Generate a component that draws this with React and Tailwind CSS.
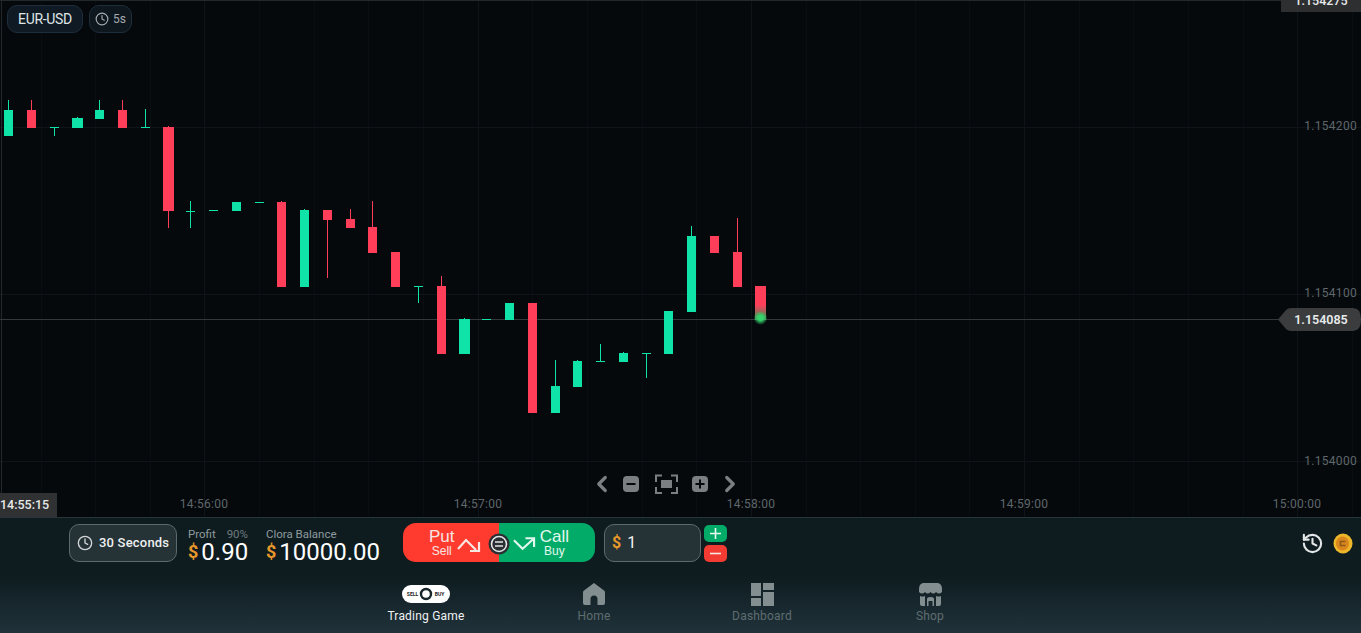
import React from "react";
import { Clock, History, ChevronLeft, ChevronRight } from "lucide-react";

const UP = "#10e3a8";
const DOWN = "#ff3f5a";

// x, width, open/close top, open/close bottom, wick top, wick bottom
const candles = [
  [4, 9, 110, 136, 100, 136, UP],
  [27, 9, 110, 128, 100, 128, DOWN],
  [50, 9, 127, 128, 127, 136, UP],
  [72, 11, 118, 128, 117, 128, UP],
  [95, 9, 110, 119, 100, 119, UP],
  [118, 9, 110, 128, 100, 128, DOWN],
  [141, 9, 127, 128, 109, 128, UP],
  [163, 11, 127, 211, 126, 228, DOWN],
  [186, 9, 211, 212, 201, 228, UP],
  [209, 9, 210, 211, 210, 211, UP],
  [232, 9, 202, 211, 202, 211, UP],
  [255, 9, 202, 203, 202, 203, UP],
  [277, 9, 202, 287, 201, 287, DOWN],
  [300, 9, 210, 287, 209, 287, UP],
  [323, 9, 210, 220, 210, 278, DOWN],
  [346, 9, 219, 228, 209, 228, DOWN],
  [368, 9, 227, 253, 201, 253, DOWN],
  [391, 9, 252, 287, 252, 287, DOWN],
  [414, 9, 286, 287, 286, 303, UP],
  [437, 9, 286, 354, 276, 354, DOWN],
  [459, 11, 319, 354, 318, 354, UP],
  [482, 9, 319, 320, 319, 320, UP],
  [505, 9, 303, 320, 303, 320, UP],
  [528, 9, 303, 413, 303, 413, DOWN],
  [551, 9, 386, 413, 360, 413, UP],
  [573, 9, 361, 387, 360, 387, UP],
  [596, 9, 361, 362, 344, 362, UP],
  [619, 9, 353, 362, 352, 362, UP],
  [642, 9, 353, 354, 353, 378, UP],
  [664, 9, 311, 354, 311, 354, UP],
  [687, 9, 236, 312, 226, 312, UP],
  [710, 9, 236, 253, 236, 253, DOWN],
  [733, 9, 252, 287, 218, 287, DOWN],
];

const minorX = [41, 95, 150, 259, 314, 368, 423, 532, 587, 642, 696, 806, 860, 915, 969, 1079, 1133, 1188, 1243, 1352];
const majorX = [204, 478, 751, 1024, 1297];
const timeLabels = [
  [204, "14:56:00"],
  [478, "14:57:00"],
  [751, "14:58:00"],
  [1024, "14:59:00"],
  [1297, "15:00:00"],
];
const priceLabels = [
  [130, "1.154200"],
  [297, "1.154100"],
  [465, "1.154000"],
];

const ChartDrawing = () => (
  <svg className="absolute inset-0" width="1361" height="517" viewBox="0 0 1361 517">
    <defs>
      <linearGradient id="liveCandle" x1="0" y1="0" x2="0" y2="1">
        <stop offset="0.55" stopColor={DOWN} />
        <stop offset="1" stopColor="#2f8f55" />
      </linearGradient>
      <radialGradient id="liveDot">
        <stop offset="0.35" stopColor="#35d36b" />
        <stop offset="1" stopColor="#35d36b" stopOpacity="0" />
      </radialGradient>
    </defs>

    {/* grid */}
    {minorX.map((x) => (
      <line key={x} x1={x + 0.5} x2={x + 0.5} y1="0" y2="517" stroke="#090e12" />
    ))}
    {majorX.map((x) => (
      <line key={x} x1={x + 0.5} x2={x + 0.5} y1="0" y2="517" stroke="#0e1418" />
    ))}
    {[127, 294, 461].map((y) => (
      <line key={y} x1="0" x2="1361" y1={y + 0.5} y2={y + 0.5} stroke="#0e1418" />
    ))}
    <line x1="1.5" x2="1.5" y1="0" y2="517" stroke="#23282b" />
    <line x1="0" x2="1361" y1="0.5" y2="0.5" stroke="#23282b" />

    {/* current price line */}
    <line x1="0" x2="1285" y1="319.5" y2="319.5" stroke="#33393a" />

    {/* candles */}
    {candles.map(([x, w, top, bottom, wickTop, wickBottom, color]) => (
      <g key={x}>
        <line x1={x + w / 2} x2={x + w / 2} y1={wickTop} y2={wickBottom} stroke={color} />
        <rect x={x} y={top} width={w} height={bottom - top} fill={color} />
      </g>
    ))}
    <rect x="755" y="286" width="11" height="34" fill="url(#liveCandle)" />
    <circle cx="760.5" cy="318" r="7" fill="url(#liveDot)" />

    {/* price tag */}
    <path
      d="M1278 319.5 L1286 310 Q1288 308 1291 308 L1353 308 Q1361 308 1361 319.5 Q1361 331 1353 331 L1291 331 Q1288 331 1286 329 Z"
      fill="#3a3c3e"
    />

    {/* axis labels */}
    <g fontFamily="Roboto, sans-serif" fontSize="12" fill="#5f676b" letterSpacing="0.3">
      {timeLabels.map(([x, label]) => (
        <text key={label} x={x} y="508" textAnchor="middle">
          {label}
        </text>
      ))}
      {priceLabels.map(([y, label]) => (
        <text key={label} x="1357" y={y} textAnchor="end">
          {label}
        </text>
      ))}
    </g>
    <text x="1321" y="324" textAnchor="middle" fontFamily="Roboto, sans-serif" fontSize="12.5" fontWeight="600" fill="#e8eaea">
      1.154085
    </text>

    {/* zoom controls */}
    <g fill="#7b7f82">
      <rect x="623" y="476" width="16" height="16" rx="4" />
      <rect x="661" y="480" width="11" height="8" />
      <path d="M656 482v-6.5h6M671 475.5h6v6.5M677 487v6h-6M662 493h-6v-6" fill="none" stroke="#7b7f82" strokeWidth="2" />
      <rect x="692" y="476" width="16" height="16" rx="4" />
    </g>
    <path d="M626.5 484h9" stroke="#05090c" strokeWidth="2" />
    <path d="M695.5 484h9M700 479.5v9" stroke="#05090c" strokeWidth="2" />
  </svg>
);

const NavItem = ({ label, active, children }) => (
  <div className="w-[168px] flex flex-col items-center">
    <div className="h-[24px] flex items-center justify-center">{children}</div>
    <span
      className={`mt-[2px] text-[12px] leading-[16px] tracking-[0.2px] ${
        active ? "text-[#f0f2f2]" : "text-[#5f6d70]"
      }`}
    >
      {label}
    </span>
  </div>
);

const App = () => {
  return (
    <div
      className="w-[1361px] h-[633px] overflow-hidden flex flex-col bg-[#05090c] text-white"
      style={{ fontFamily: "Roboto, sans-serif" }}
    >
      {/* Chart */}
      <div className="relative h-[517px] shrink-0">
        <ChartDrawing />

        <div className="absolute left-[7px] top-[5px] flex gap-[6px]">
          <div className="h-[28px] w-[76px] flex items-center justify-center rounded-[10px] border border-[#1e2d3a] bg-[#101a24] text-[14px] tracking-[-0.3px] text-[#dfe4e6]">
            EUR-USD
          </div>
          <div className="h-[28px] w-[43px] flex items-center justify-center gap-[4px] rounded-[10px] border border-[#1e2d3a] bg-[#0e161e] text-[12px] text-[#a4abaf]">
            <Clock size={14} strokeWidth={2} />
            5s
          </div>
        </div>

        <div className="absolute right-0 top-0 h-[12px] w-[80px] overflow-hidden bg-[#2d2f31] text-center text-[12.5px] font-medium leading-[12px] text-[#e8eaea]">
          <span className="relative top-[-5px]">1.154275</span>
        </div>

        <div className="absolute left-0 bottom-0 h-[24px] w-[57px] bg-[#2f3133] text-left text-[12.5px] font-medium leading-[24px] text-[#e8eaea]">
          14:55:15
        </div>

        <ChevronLeft className="absolute left-[589px] top-[471px] text-[#7b7f82]" size={26} strokeWidth={3} />
        <ChevronRight className="absolute left-[717px] top-[471px] text-[#7b7f82]" size={26} strokeWidth={3} />
      </div>

      {/* Bottom panel */}
      <div className="flex-1 border-t border-[#26353a] bg-gradient-to-b from-[#0e1c20] via-[#0e1c20] to-[#20323a] flex flex-col">
        <div className="h-[56px] flex items-start pt-[6px] pl-[69px] pr-[8px]">
          <div className="w-[108px] h-[38px] flex items-center gap-[6px] pl-[7px] rounded-[10px] border border-[#5b6a6e] bg-[#253236]">
            <Clock size={16} strokeWidth={2} className="text-[#d5d9da]" />
            <span className="text-[13px] font-medium tracking-[0.2px] text-[#eef0f0] whitespace-nowrap">30 Seconds</span>
          </div>

          <div className="ml-[11px] w-[60px] flex flex-col">
            <div className="flex justify-between text-[11.5px] leading-[14px] text-[#8f9a9d] mt-[3px]">
              <span>Profit</span>
              <span className="text-[#6f7b7e]">90%</span>
            </div>
            <div className="flex items-center h-[22px]">
              <span className="text-[18px] leading-[22px] font-bold text-[#e8972a] mr-[3px]">$</span>
              <span className="text-[24px] leading-[22px]">0.90</span>
            </div>
          </div>

          <div className="ml-[18px] w-[116px] flex flex-col">
            <div className="text-[11.5px] leading-[14px] text-[#8f9a9d] mt-[3px]">Clora Balance</div>
            <div className="flex items-center h-[22px]">
              <span className="text-[18px] leading-[22px] font-bold text-[#e8972a] mr-[3px]">$</span>
              <span className="text-[24px] leading-[22px]">10000.00</span>
            </div>
          </div>

          {/* Put / Call */}
          <div className="relative ml-[21px] -mt-[1px] w-[192px] h-[39px] flex rounded-[13px] overflow-hidden" style={{ fontFamily: '"Liberation Sans", Arial, sans-serif' }}>
            <div className="w-[96px] bg-[#ff3b30] flex items-center pl-[26px] gap-[2px]">
              <div className="flex flex-col items-center">
                <span className="text-[17px] leading-[17px] text-[#f6e6e2]">Put</span>
                <span className="text-[12px] leading-[13px] text-[#f6e6e2]">Sell</span>
              </div>
              <svg width="24" height="16" viewBox="0 0 24 16" fill="none" stroke="#f8e6e2" strokeWidth="2.2" className="mt-[4px]">
                <path d="M1 12 L9 3 L19 13" />
                <path d="M22 5 L22 14 L13 14" />
              </svg>
            </div>
            <div className="w-[96px] bg-[#03ab68] flex items-center justify-end pr-[26px] gap-[4px]">
              <svg width="23" height="16" viewBox="0 0 24 16" fill="none" stroke="#e2f8ee" strokeWidth="2.2" className="mt-[2px]">
                <path d="M1 4 L10 13 L21 3" />
                <path d="M13 2 L22 2 L22 11" />
              </svg>
              <div className="flex flex-col items-center">
                <span className="text-[17px] leading-[17px] text-[#e2f8ee]">Call</span>
                <span className="text-[12px] leading-[13px] text-[#e2f8ee]">Buy</span>
              </div>
            </div>
            <svg className="absolute left-[85px] top-[10px]" width="22" height="22" viewBox="0 0 22 22">
              <circle cx="11" cy="11" r="10.5" fill="#2b2f33" />
              <circle cx="11" cy="11" r="7.5" fill="none" stroke="#e4e6e6" strokeWidth="1.6" />
              <path d="M7 9h8M7 13h8" stroke="#e4e6e6" strokeWidth="1.6" />
            </svg>
          </div>

          {/* Amount */}
          <div className="ml-[9px] w-[97px] h-[38px] flex items-center pl-[7px] gap-[6px] rounded-[10px] border border-[#5b6a6e] bg-[#253236]">
            <span className="text-[16px] font-bold text-[#e8972a]">$</span>
            <span className="text-[16px] text-[#f0f2f2]">1</span>
          </div>

          <div className="ml-[3px] flex flex-col gap-[3px] mt-[1px]">
            <div className="w-[23px] h-[17px] rounded-[5px] bg-[#03ab68] flex items-center justify-center">
              <svg width="13" height="13" viewBox="0 0 13 13" stroke="#e8f8f0" strokeWidth="1.6">
                <path d="M1 6.5h11M6.5 1v11" />
              </svg>
            </div>
            <div className="w-[23px] h-[17px] rounded-[5px] bg-[#f23c33] flex items-center justify-center">
              <svg width="13" height="3" viewBox="0 0 13 3" stroke="#f8e6e2" strokeWidth="1.6">
                <path d="M1 1.5h11" />
              </svg>
            </div>
          </div>

          <div className="ml-auto flex items-center gap-[9px] h-[38px]">
            <History size={23} strokeWidth={2.2} className="text-[#e4e7e7]" />
            <svg width="20" height="21" viewBox="0 0 20 21">
              <ellipse cx="10" cy="10.5" rx="9.5" ry="10" fill="#edb62a" />
              <ellipse cx="9.5" cy="10.5" rx="6.5" ry="7" fill="#d9861d" />
              <path d="M12.5 8.5h-5v4h5" fill="none" stroke="#8e5a1c" strokeWidth="1.6" />
            </svg>
          </div>
        </div>

        {/* Nav */}
        <div className="flex justify-center pr-[5px] pt-[8px]">
          <NavItem label="Trading Game" active>
            <svg width="48" height="18" viewBox="0 0 48 18">
              <rect width="48" height="18" rx="9" fill="#ffffff" />
              <circle cx="24" cy="9" r="5" fill="none" stroke="#16262a" strokeWidth="2.4" />
              <text x="10.5" y="11" textAnchor="middle" fontFamily="Roboto, sans-serif" fontSize="5" fontWeight="700" fill="#222">SELL</text>
              <text x="37.5" y="11" textAnchor="middle" fontFamily="Roboto, sans-serif" fontSize="5" fontWeight="700" fill="#222">BUY</text>
            </svg>
          </NavItem>
          <NavItem label="Home">
            <svg width="22" height="22" viewBox="0 0 22 22" fill="#838e91">
              <path d="M11 0 L21 7.5 Q22 8.2 22 9.5 L22 20 Q22 22 20 22 L14.5 22 L14.5 16 Q14.5 12.5 11 12.5 Q7.5 12.5 7.5 16 L7.5 22 L2 22 Q0 22 0 20 L0 9.5 Q0 8.2 1 7.5 Z" />
            </svg>
          </NavItem>
          <NavItem label="Dashboard">
            <svg width="23" height="23" viewBox="0 0 23 23" fill="#838e91">
              <rect x="0" y="0" width="10" height="13" />
              <rect x="12" y="0" width="11" height="7" />
              <rect x="0" y="15" width="10" height="8" />
              <rect x="12" y="9" width="11" height="14" />
            </svg>
          </NavItem>
          <NavItem label="Shop">
            <svg width="23" height="23" viewBox="0 0 23 23" fill="#838e91">
              <path d="M4 0 L19 0 Q23 1 23 6 L23 9 Q20 12 17 9 Q14.5 12 11.5 9 Q8.5 12 6 9 Q3 12 0 9 L0 6 Q0 1 4 0 Z" />
              <path d="M1 13 Q3.5 14 6 13 L6 23 L3 23 Q1 23 1 21 Z" />
              <path d="M22 13 Q19.5 14 17 13 L17 23 L20 23 Q22 23 22 21 Z" />
              <path d="M8 23 L8 16 Q8 14 11.5 14 Q15 14 15 16 L15 23 L13.5 23 L13.5 18 L9.5 18 L9.5 23 Z" />
            </svg>
          </NavItem>
        </div>
      </div>
    </div>
  );
};

export default App;
